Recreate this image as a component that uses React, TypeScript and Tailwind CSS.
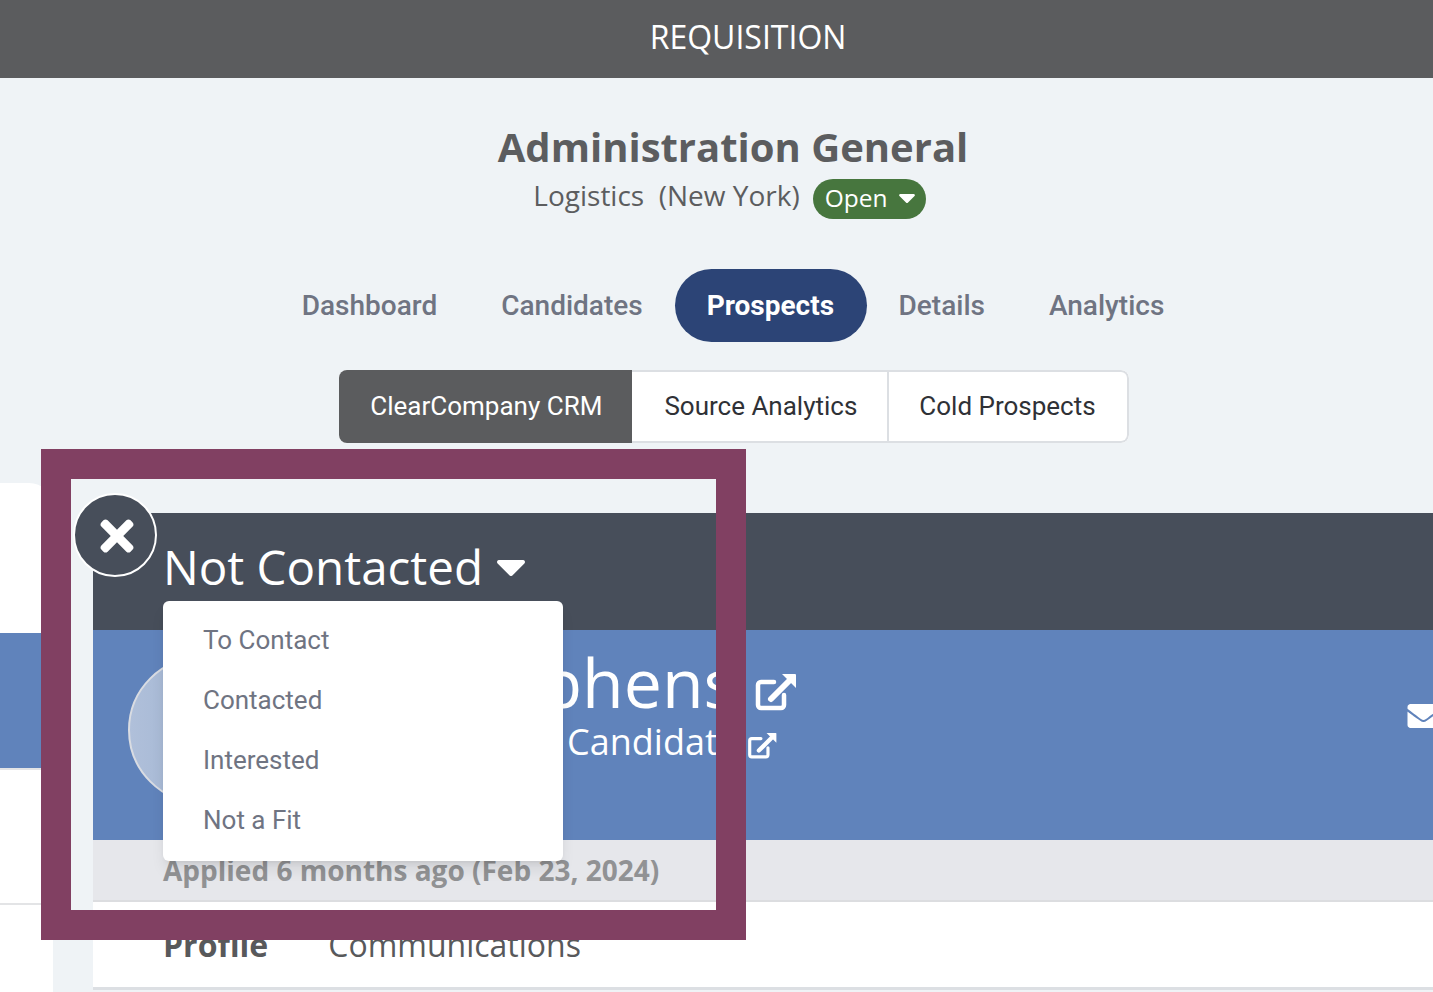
import React from 'react'
import { FaEnvelope, FaTimes } from 'react-icons/fa'

const OPEN = "font-['Open_Sans',sans-serif]"
const ROBOTO = "font-['Roboto',sans-serif]"

const tabs = ['Dashboard', 'Candidates', 'Prospects', 'Details', 'Analytics']
const statuses = ['To Contact', 'Contacted', 'Interested', 'Not a Fit']

const ExternalLink: React.FC<{ className: string }> = ({ className }) => (
  <svg viewBox="0 0 41 37" className={className} fill="none">
    <path d="M19 8H6a3 3 0 0 0-3 3v20a3 3 0 0 0 3 3h20a3 3 0 0 0 3-3V21" stroke="white" strokeWidth="4.5" strokeLinecap="round" />
    <path d="M16 25L35 6" stroke="white" strokeWidth="6" strokeLinecap="round" />
    <path d="M27 0H40a1 1 0 0 1 1 1V14Z" fill="white" />
  </svg>
)

const Caret: React.FC<{ className: string }> = ({ className }) => (
  <svg viewBox="0 0 28 16" className={className} fill="white">
    <path d="M2 0H26a2 2 0 0 1 1.4 3.4L15.4 15.4a2 2 0 0 1-2.8 0L.6 3.4A2 2 0 0 1 2 0Z" />
  </svg>
)

export default function App() {
  return (
    <div className={`relative h-[992px] w-full overflow-hidden bg-[#eff3f6] ${OPEN}`}>
      {/* Page header */}
      <div className="flex h-[78px] items-center justify-center bg-[#5b5c5e] pb-[5px] pl-[63px] text-[32px] text-white">
        REQUISITION
      </div>

      {/* Title */}
      <div className="flex flex-col items-center pl-[33px] pt-[43px] text-[#5c5d5f]">
        <h1 className="text-[40px] font-bold leading-[52px]">Administration General</h1>
        <div className="mr-[7px] flex h-[42px] items-center gap-[13px] text-[28px]">
          <span className="mt-[2px] whitespace-pre">Logistics  (New York)</span>
          <span className="mt-[9px] flex h-[40px] w-[113px] items-center gap-[11px] rounded-full bg-[#47763e] pl-[12px] text-[24.5px] text-white">
            Open
            <Caret className="h-[9px] w-[16px]" />
          </span>
        </div>
      </div>

      {/* Tabs */}
      <div className={`mt-[54px] flex justify-center pl-[33px] text-[28px] font-medium ${ROBOTO}`}>
        {tabs.map((tab) => (
          <div
            key={tab}
            className={`flex h-[73px] items-center rounded-full pl-[32px] ${
              tab === 'Prospects' ? 'bg-[#2c4476] pr-[32.5px] font-bold text-white' : 'pr-[32px] text-[#6f7482]'
            }`}
          >
            {tab}
          </div>
        ))}
      </div>

      {/* Sub tabs */}
      <div className={`mt-[28px] flex justify-center pl-[35px] text-[26px] ${ROBOTO}`}>
        <div className="flex h-[73px] overflow-hidden rounded-lg bg-white text-[#2f3136]">
          <div className="flex items-center bg-[#5b5c5e] pl-[31px] pr-[30px] text-white">ClearCompany CRM</div>
          <div className="flex items-center border-y-2 border-r-2 border-[#dcdfe3] pl-[32px] pr-[30px]">Source Analytics</div>
          <div className="flex items-center rounded-r-lg border-y-2 border-r-2 border-[#dcdfe3] pl-[30px] pr-[31px]">Cold Prospects</div>
        </div>
      </div>

      {/* Content behind the modal */}
      <div className="mt-[40px] flex items-start">
        <div className="flex h-[520px] w-[53px] shrink-0 flex-col overflow-hidden rounded-tr-[24px] bg-white">
          <div className="h-[150px] shrink-0" />
          <div className="h-[135px] shrink-0 bg-[#6083bb]" />
          <div className="h-[137px] shrink-0 border-t-2 border-b-2 border-[#e3e4e6]" />
        </div>

        <div className="ml-[40px] mt-[30px] min-w-0 flex-1">
          <div className="h-[117px] bg-[#474e5a] pl-[70px] pt-[24px] text-[47.5px] leading-[60px] text-white">
            <div className="flex items-center gap-[14px]">
              Not Contacted
              <Caret className="mt-[2px] h-[16px] w-[28px]" />
            </div>
          </div>

          <div className="flex h-[210px] items-start bg-[#6083bb] pl-[35px] text-white">
            <div className="mt-[26px] h-[148px] w-[148px] shrink-0 rounded-full border-2 border-[#d9dce2] bg-gradient-to-r from-[#b0c0da] to-[#92a9cb]" />
            <div className="ml-[96px] flex w-[424px] shrink-0 flex-col items-end">
              <div className="flex h-[100px] items-center gap-[19px]">
                <span className="mt-[3px] text-[68px] leading-[72px]">Stephens</span>
                <ExternalLink className="mt-[25px] h-[37px] w-[41px]" />
              </div>
              <div className="-mt-[13px] flex h-[50px] items-center gap-[9px] pr-[19px]">
                <span className="text-[36px] leading-[40px]">Candidate</span>
                <ExternalLink className="mt-[7px] h-[26px] w-[30px]" />
              </div>
            </div>
            <FaEnvelope className="-mr-[7px] ml-auto mt-[70px] h-[32px] w-[33px] shrink-0" />
          </div>

          <div className="h-[62px] border-b-2 border-[#dcdde0] bg-[#e6e7eb] pl-[70px] pt-[8px] text-[28px] font-bold leading-[44px] text-[#919294]">
            Applied 6 months ago (Feb 23, 2024)
          </div>

          <div className="flex h-[88px] items-center gap-[60px] border-b-[3px] border-[#dcdfe3] bg-white pl-[70px] text-[32px] text-[#58595b]">
            <span className="font-bold">Profile</span>
            <span>Communications</span>
          </div>
        </div>
      </div>

      {/* Status menu */}
      <div className={`absolute left-[163px] top-[601px] w-[400px] rounded-md bg-white pb-[11px] pt-[9px] text-[26px] text-[#6f7482] shadow-lg ${ROBOTO}`}>
        {statuses.map((status) => (
          <div key={status} className="flex h-[60px] items-center pl-[40px]">
            {status}
          </div>
        ))}
      </div>

      {/* Close button */}
      <div className="absolute left-[73px] top-[493px] flex h-[84px] w-[84px] items-center justify-center rounded-full border-2 border-white bg-[#474e5a] text-white">
        <FaTimes className="ml-[3px] mt-[2px] h-[48px] w-[48px]" />
      </div>

      {/* Callout frame */}
      <div className="absolute left-[41px] top-[449px] h-[491px] w-[705px] border-[30px] border-[#814062]" />
    </div>
  )
}
